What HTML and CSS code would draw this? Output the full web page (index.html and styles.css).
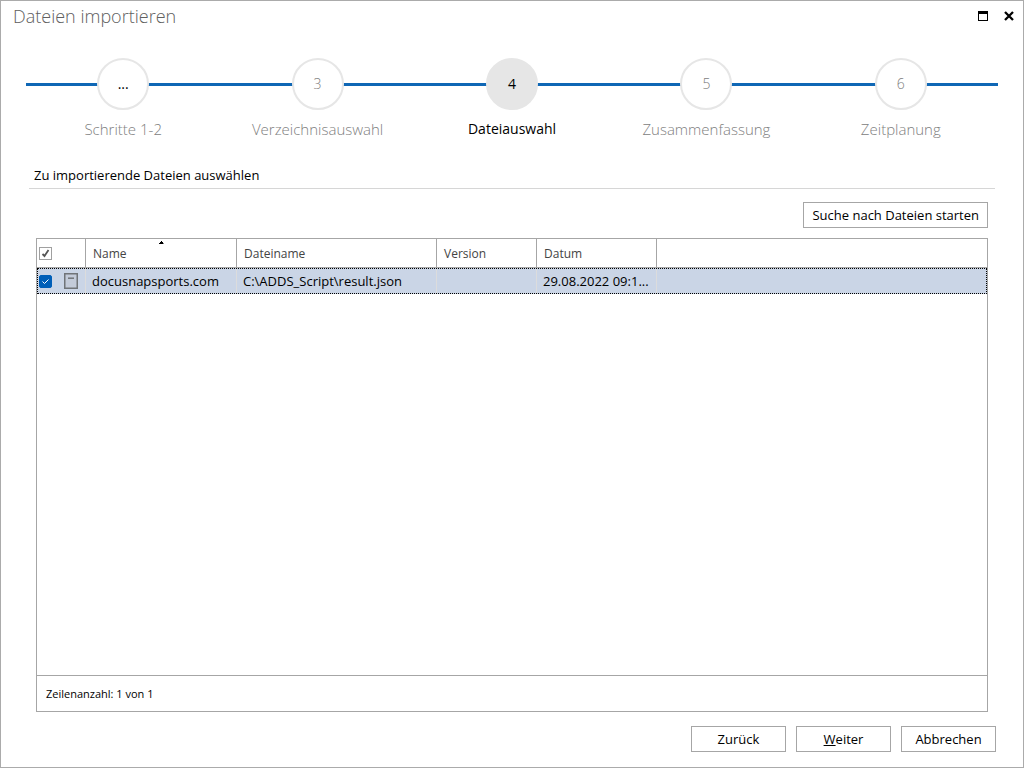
FILE: index.html
```html
<!DOCTYPE html>
<html lang="de">
<head>
<meta charset="utf-8">
<title>Dateien importieren</title>
<link rel="stylesheet" href="styles.css">
</head>
<body>
<main class="dialog">
  <header class="titlebar">
    <h1 class="title">Dateien importieren</h1>
    <div class="window-controls">
      <button class="window-button" type="button" aria-label="Maximieren">
        <svg width="10" height="10" viewBox="0 0 10 10" shape-rendering="crispEdges"><path d="M0 0H10V10H0ZM1 3V9H9V3Z" fill-rule="evenodd"/></svg>
      </button>
      <button class="window-button" type="button" aria-label="Schließen">
        <svg width="10" height="10" viewBox="0 0 10 10"><path d="M1 1L9 9M9 1L1 9" fill="none" stroke="#000" stroke-width="2.3"/></svg>
      </button>
    </div>
  </header>

  <ol class="steps">
    <li class="step step-past"><span class="step-circle">...</span><span class="step-label">Schritte 1-2</span></li>
    <li class="step"><span class="step-circle">3</span><span class="step-label">Verzeichnisauswahl</span></li>
    <li class="step step-current" aria-current="step"><span class="step-circle">4</span><span class="step-label">Dateiauswahl</span></li>
    <li class="step"><span class="step-circle">5</span><span class="step-label">Zusammenfassung</span></li>
    <li class="step"><span class="step-circle">6</span><span class="step-label">Zeitplanung</span></li>
  </ol>

  <h2 class="section-title">Zu importierende Dateien auswählen</h2>

  <div class="toolbar">
    <button class="button button-search" type="button">Suche nach Dateien starten</button>
  </div>

  <section class="grid">
    <div class="grid-body">
      <table class="files">
        <colgroup>
          <col class="col-check"><col class="col-name"><col class="col-file"><col class="col-version"><col class="col-date"><col>
        </colgroup>
        <thead>
          <tr>
            <th><input class="check check-all" type="checkbox" aria-label="Alle auswählen" checked></th>
            <th class="sorted" aria-sort="ascending">Name<svg class="sort-arrow" width="5" height="3" viewBox="0 0 5 3" shape-rendering="crispEdges"><path d="M2 0H3V1H4V2H5V3H0V2H1V1H2Z"/></svg></th>
            <th>Dateiname</th>
            <th>Version</th>
            <th>Datum</th>
            <th></th>
          </tr>
        </thead>
        <tbody>
          <tr class="selected">
            <td><div class="row-tools">
              <input class="check check-row" type="checkbox" aria-label="docusnapsports.com auswählen" checked>
              <svg width="14" height="16" viewBox="0 0 14 16"><path d="M.75 .75H13.25V15.25H.75Z" fill="#c3cbd9" stroke="#707478" stroke-width="1.5"/><path d="M4 5.200H10" stroke="#707478" stroke-width="1.500"/></svg>
            </div></td>
            <td>docusnapsports.com</td>
            <td>C:\ADDS_Script\result.json</td>
            <td></td>
            <td>29.08.2022 09:1...</td>
            <td></td>
          </tr>
        </tbody>
      </table>
    </div>
    <div class="grid-footer">Zeilenanzahl: 1 von 1</div>
  </section>

  <footer class="actions">
    <button class="button" type="button">Zurück</button>
    <button class="button" type="button" accesskey="w"><u>W</u>eiter</button>
    <button class="button" type="button">Abbrechen</button>
  </footer>
</main>
</body>
</html>
```
FILE: styles.css
```css
* {
  box-sizing: border-box;
}

body {
  margin: 0;
  background: #fff;
  color: #000;
  font: 14px/20px "Open Sans", "Noto Sans", sans-serif;
}

.dialog {
  display: flex;
  flex-direction: column;
  min-height: 100vh;
  border: 1px solid #ababab;
}

.titlebar {
  display: flex;
  justify-content: space-between;
  padding: 3px 9px 0 12px;
}

.title {
  margin: 0;
  color: #606060;
  font-size: 18px;
  font-weight: 300;
  line-height: 24px;
}

.window-controls {
  display: flex;
  align-items: center;
  gap: 16px;
}

.window-button {
  display: flex;
  padding: 0;
  border: 0;
  background: none;
}

.steps {
  display: flex;
  margin: 30px 25px 0;
  padding: 0;
  list-style: none;
  background: linear-gradient(#0f67b5, #0f67b5) 0 25px / 100% 3px no-repeat;
}

.step {
  display: flex;
  flex: 1 1 0;
  flex-direction: column;
  align-items: center;
  gap: 9px;
  color: #808080;
  font-weight: 300;
}

.step-circle {
  display: flex;
  align-items: center;
  justify-content: center;
  width: 52px;
  height: 52px;
  border: 2px solid #e6e6e6;
  border-radius: 50%;
  background: #fff;
}

.step-label {
  font-size: 15px;
}

.step-past .step-circle {
  color: #000;
  font-weight: 400;
}

.step-current {
  color: #000;
  font-weight: 400;
}

.step-current .step-label {
  font-size: 14px;
}

.step-current .step-circle {
  background: #e6e6e6;
}

.section-title {
  margin: 26px 28px 0;
  padding: 0 5px 3px;
  border-bottom: 1px solid #d6d6d6;
  font-size: 13px;
  font-weight: 400;
}

.toolbar {
  display: flex;
  justify-content: flex-end;
  margin: 13px 35px 10px;
}

.button {
  width: 95px;
  height: 26px;
  padding: 0;
  border: 1px solid #a6a6a6;
  background: #fff;
  color: #000;
  font: 13px/20px "Open Sans", "Noto Sans", sans-serif;
}

.button-search {
  width: auto;
  padding: 0 8px;
}

.grid {
  display: flex;
  flex: 1;
  flex-direction: column;
  margin: 0 35px;
  border: 1px solid #a6a6a6;
}

.grid-body {
  flex: 1;
}

.files {
  width: 100%;
  border-collapse: separate;
  border-spacing: 0;
  table-layout: fixed;
}

.col-check {
  width: 49px;
}

.col-name {
  width: 151px;
}

.col-file {
  width: 200px;
}

.col-version {
  width: 100px;
}

.col-date {
  width: 120px;
}

.files th {
  height: 29px;
  padding: 2px 7px 0;
  border-right: 1px solid #a6a6a6;
  border-bottom: 1px solid #a6a6a6;
  color: #444;
  font-size: 12px;
  font-weight: 400;
  text-align: left;
}

.files th:first-child {
  padding: 0 2px;
}

.files th:last-child,
.files td:last-child {
  border-right: 0;
}

.files .sorted {
  position: relative;
}

.sort-arrow {
  position: absolute;
  top: 2px;
  left: 50%;
  transform: translateX(-50%);
}

.files td {
  height: 26px;
  padding: 0 0 0 6px;
  border-right: 1px solid #dcdcdc;
  overflow: hidden;
  font-size: 13px;
  white-space: nowrap;
}

.files td:first-child {
  padding: 0 2px;
}

.selected {
  background: #cad5e6;
  outline: 1px dotted #000;
  outline-offset: -1px;
}

.row-tools {
  display: flex;
  align-items: center;
  gap: 12px;
}

.check {
  display: block;
  width: 13px;
  height: 13px;
  margin: 0;
  border: 1px solid #a0a0a0;
  appearance: none;
  background: #fff center / 11px 11px no-repeat;
}

.check-all:checked {
  background-image: url("data:image/svg+xml,%3Csvg xmlns='http://www.w3.org/2000/svg' viewBox='0 0 11 11'%3E%3Cpath d='M2.500 6l2 2 4-6' fill='none' stroke='%23555' stroke-width='1.800'/%3E%3C/svg%3E");
}

.check-row:checked {
  border-color: #005fb8;
  border-radius: 2px;
  background-color: #005fb8;
  background-image: url("data:image/svg+xml,%3Csvg xmlns='http://www.w3.org/2000/svg' viewBox='0 0 11 11'%3E%3Cpath d='M2.500 5.500l2 2 4-4' fill='none' stroke='%23fff'/%3E%3C/svg%3E");
}

.grid-footer {
  padding: 8px 9px 7px;
  border-top: 1px solid #a6a6a6;
  font-size: 11px;
}

.actions {
  display: flex;
  justify-content: flex-end;
  gap: 10px;
  padding: 14px 27px 15px;
}
```
